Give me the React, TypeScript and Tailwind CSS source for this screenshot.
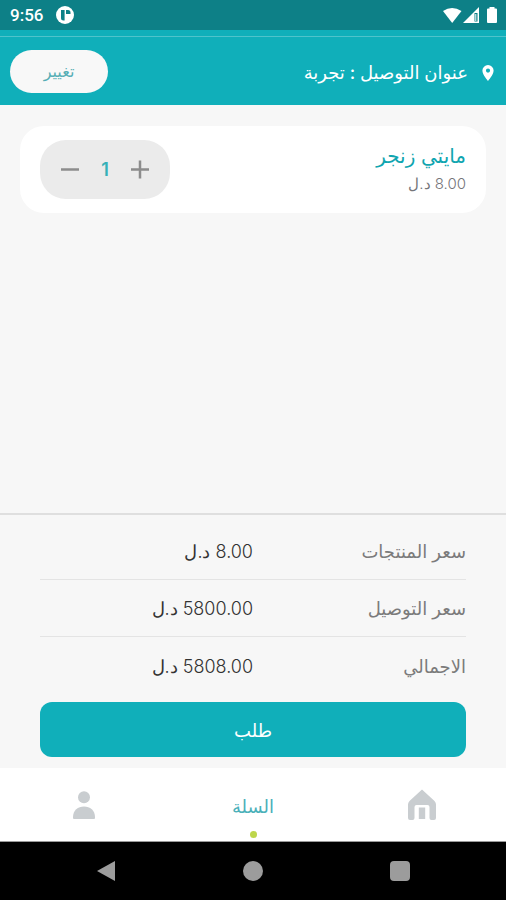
import { useState } from "react";

const ui = "font-[Inter,'DejaVu_Sans',sans-serif]";

type Line = { label: string; amount: string };

function StatusBar() {
  return (
    <div dir="ltr" className="flex h-[30px] items-center justify-between bg-[#0d8087] pl-[10px] pr-2 font-[Roboto,sans-serif] text-white">
      <div className="flex items-center gap-[13px]">
        <span className="text-[17px] font-medium leading-6">9:56</span>
        <svg className="size-[18px]" viewBox="0 0 18 18" aria-hidden="true">
          <circle cx="9" cy="9" r="9" fill="#fff" />
          <path d="M5 4h3.600v10.500H7.500A2.500 2.500 0 0 1 5 12z M10 4h2a2.500 2.500 0 0 1 2.500 2.500V8H10z" fill="#0d8087" />
        </svg>
      </div>
      <svg className="h-[18px] w-[56px]" viewBox="0 0 56 18" fill="#fff" aria-hidden="true">
        <path d="M1 5Q10 -1 19.500 5L10.200 17z" />
        <path fillRule="evenodd" d="M37 1V17H21z M35.500 7h-3v8.500h3z" />
        <path d="M33.300 8h1v7h-1z" />
        <path d="M47.500 1h5v1.500h1.500q1 0 1 1V16q0 1-1 1H46q-1 0-1-1V3.500q0-1 1-1h1.500z" />
      </svg>
    </div>
  );
}

function AddressHeader() {
  return (
    <header className="flex h-[75px] flex-col bg-[#10afba]">
      <div className="mt-1.5 h-px bg-[#4fc3cb]" />
      <div className="flex flex-1 items-center justify-between pl-[10px] pr-3">
        <div className="flex items-center gap-[14px] pt-1 text-white">
          <svg className="h-4 w-3" viewBox="0 0 12 16" aria-hidden="true">
            <path fillRule="evenodd" d="M6 0a5.600 5.600 0 0 0-5.600 5.600C.4 9.800 6 16 6 16s5.600-6.200 5.600-10.400A5.600 5.600 0 0 0 6 0zm0 7.700a2.100 2.100 0 1 1 0-4.200 2.100 2.100 0 0 1 0 4.200z" fill="#fff" />
          </svg>
          <h1 className="text-[18px] font-medium leading-7">عنوان التوصيل : تجربة</h1>
        </div>
        <button className="h-[43px] w-[98px] rounded-full bg-[#f8f8f8] text-[16px] text-[#55aeb5]">تغيير</button>
      </div>
    </header>
  );
}

function Stepper() {
  const [count, setCount] = useState(1);
  return (
    <div className="flex h-[59px] w-[130px] items-center justify-between rounded-[26px] bg-[#ebebeb] px-5">
      <button aria-label="زيادة" onClick={() => setCount(count + 1)} className="text-[#8c8c8c]">
        <svg className="size-5" viewBox="0 0 20 20" fill="none" stroke="currentColor" strokeWidth="2.500" aria-hidden="true">
          <path d="M1 9.500h18M10 .5v18" />
        </svg>
      </button>
      <span className="text-[18px] font-semibold leading-7 text-[#35b0b8]">{count}</span>
      <button aria-label="إنقاص" onClick={() => setCount(Math.max(1, count - 1))} className="text-[#8c8c8c]">
        <svg className="size-5" viewBox="0 0 20 20" fill="none" stroke="currentColor" strokeWidth="2.500" aria-hidden="true">
          <path d="M1 9.500h18" />
        </svg>
      </button>
    </div>
  );
}

const lines: Line[] = [
  { label: "سعر المنتجات", amount: "8.00 د.ل" },
  { label: "سعر التوصيل", amount: "5800.00 د.ل" },
  { label: "الاجمالي", amount: "5808.00 د.ل" },
];

function Summary() {
  return (
    <section className="border-t-2 border-[#dfdfdf] px-10 pb-[11px] pt-2">
      <dl className="divide-y divide-[#e4e4e4]">
        {lines.map((line) => (
          <div key={line.label} className="grid h-[57px] grid-cols-2 items-center pt-0.5 text-[18px] leading-7">
            <dt className="text-[#7b7b7b]">{line.label}</dt>
            <dd className="font-light text-[#333]">{line.amount}</dd>
          </div>
        ))}
      </dl>
      <button className="mt-2 h-[55px] w-full rounded-xl bg-[#10afba] pt-0.5 text-[18px] font-medium text-white">طلب</button>
    </section>
  );
}

function TabBar() {
  return (
    <nav className="grid h-[74px] grid-cols-3 items-center border-b border-[#9a9a9a] bg-white">
      <a href="#home" aria-label="الرئيسية" className="flex justify-center">
        <svg className="h-8 w-[30px]" viewBox="0 0 30 32" fill="#c9cdd0" aria-hidden="true">
          <path d="M15 0.500 27.500 12q1.500 1.500 1.500 3.500V29q0 2-2 2h-2.500q-2 0-2-2V18q0-2-2-2h-11q-2 0-2 2v11q0 2-2 2H3q-2 0-2-2V15.500Q1 13.500 2.500 12z" />
          <path d="M11.800 18.500h6.400V30h-6.400z" />
        </svg>
      </a>
      <a href="#cart" className="flex h-full flex-col items-center justify-end gap-[10px] pb-[3px]">
        <span className="text-[18px] leading-7 text-[#4ab0b9]">السلة</span>
        <span className="size-[7px] rounded-full bg-[#bdd64b]" />
      </a>
      <a href="#profile" aria-label="حسابي" className="flex justify-center">
        <svg className="h-7 w-[22px]" viewBox="0 0 22 28" fill="#c9cdd0" aria-hidden="true">
          <circle cx="11" cy="6.200" r="6" />
          <path d="M0 26C0 19.500 5 15.500 11 15.500S22 19.500 22 26v1q0 1-1 1H1q-1 0-1-1z" />
        </svg>
      </a>
    </nav>
  );
}

function SystemNav() {
  return (
    <div dir="ltr" className="flex h-[58px] items-center justify-between bg-black px-24">
      <button aria-label="رجوع">
        <svg className="size-5" viewBox="0 0 20 20" fill="#9c9c9c" aria-hidden="true">
          <path d="M1 10 19 0v20z" />
        </svg>
      </button>
      <button aria-label="الشاشة الرئيسية" className="size-5 rounded-full bg-[#9c9c9c]" />
      <button aria-label="التطبيقات" className="size-5 rounded-sm bg-[#9c9c9c]" />
    </div>
  );
}

export default function App() {
  return (
    <div dir="rtl" className={`flex min-h-screen flex-col bg-[#f7f7f7] ${ui}`}>
      <StatusBar />
      <AddressHeader />
      <main className="flex flex-1 flex-col justify-between">
        <article className="mx-5 mt-[21px] flex h-[87px] items-center justify-between rounded-[24px] bg-white px-5">
          <div className="pb-1">
            <h2 className="text-[20px] leading-8 text-[#10a5b0]">مايتي زنجر</h2>
            <p className="text-[15px] font-light leading-6 text-[#75757a]">8.00 د.ل</p>
          </div>
          <Stepper />
        </article>
        <Summary />
      </main>
      <TabBar />
      <SystemNav />
    </div>
  );
}
